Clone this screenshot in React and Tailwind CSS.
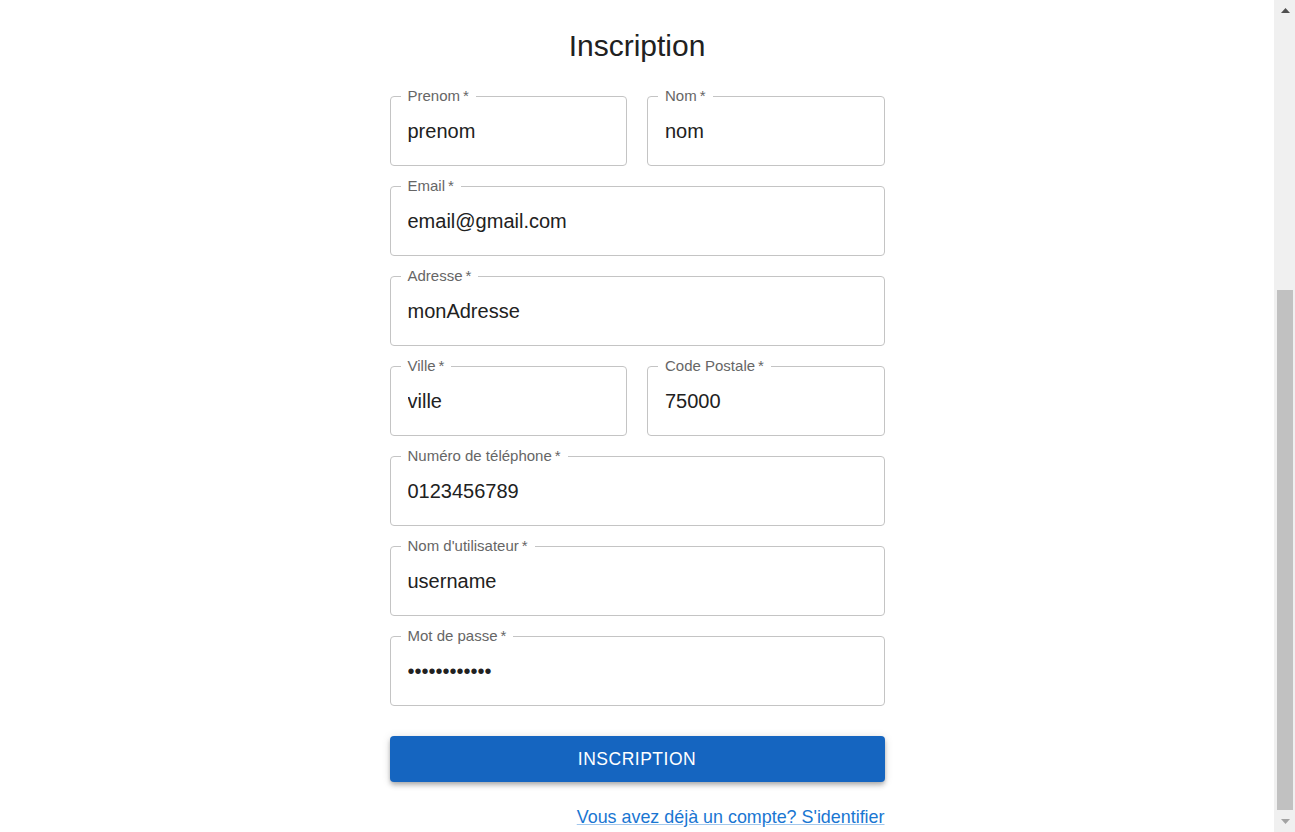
import React from "react";

const font = { fontFamily: '"Liberation Sans", Arial, sans-serif' };

function Field({ label, value, type = "text" }) {
  return (
    <div className="relative h-[70px] rounded-[4px] border border-[#c4c4c4] flex items-center min-w-0">
      <span className="absolute left-[10px] top-[-10px] bg-white px-[7px] text-[15px] leading-[17px] text-[#666666] whitespace-nowrap">
        {label}{"\u2009*"}
      </span>
      <input
        readOnly
        type={type}
        value={value}
        className="w-full bg-transparent pl-[17px] pr-[14px] text-[20px] leading-[26px] text-[#212121] outline-none"
        style={font}
      />
    </div>
  );
}

export default function App() {
  return (
    <div className="flex h-[832px] w-full overflow-hidden bg-white" style={font}>
      <div className="flex-1 flex justify-center">
        <div className="w-[495px] flex flex-col pt-[26px]">
          <h1 className="text-center text-[30px] leading-[40px] text-[#212121] font-normal">Inscription</h1>
          <div className="mt-[30px] flex flex-col gap-[20px]">
            <div className="grid grid-cols-2 gap-[20px]">
              <Field label="Prenom" value="prenom" />
              <Field label="Nom" value="nom" />
            </div>
            <Field label="Email" value="email@gmail.com" />
            <Field label="Adresse" value="monAdresse" />
            <div className="grid grid-cols-2 gap-[20px]">
              <Field label="Ville" value="ville" />
              <Field label="Code Postale" value="75000" />
            </div>
            <Field label="Numéro de téléphone" value="0123456789" />
            <Field label="Nom d'utilisateur" value="username" />
            <Field label="Mot de passe" value="passwordpass" type="password" />
          </div>
          <button className="mt-[30px] h-[46px] w-full rounded-[4px] bg-[#1565c0] text-white text-[17.5px] tracking-[0.5px] uppercase shadow-[0_2px_4px_-1px_rgba(0,0,0,0.2),0_4px_5px_0_rgba(0,0,0,0.14),0_1px_10px_0_rgba(0,0,0,0.12)]">
            Inscription
          </button>
          <div className="mt-[23px] flex justify-end">
            <a className="text-[17.9px] leading-[24px] text-[#1976d2] underline decoration-[#1976d2]/40 cursor-pointer">
              Vous avez déjà un compte? S'identifier
            </a>
          </div>
        </div>
      </div>
      <div className="w-[21px] h-full bg-[#f0f0f0] flex flex-col items-center pl-[1px]">
        <div className="h-[20px] flex items-center justify-center">
          <svg width="9" height="5" viewBox="0 0 9 5"><path d="M4.5 0L9 5H0z" fill="#505050" /></svg>
        </div>
        <div className="flex-1 w-full flex flex-col px-[2px]">
          <div className="h-[270px]" />
          <div className="flex-1 bg-[#c1c1c1]" />
        </div>
        <div className="h-[22px] flex items-center justify-center">
          <svg width="9" height="5" viewBox="0 0 9 5"><path d="M0 0H9L4.5 5z" fill="#a3a3a3" /></svg>
        </div>
      </div>
    </div>
  );
}
